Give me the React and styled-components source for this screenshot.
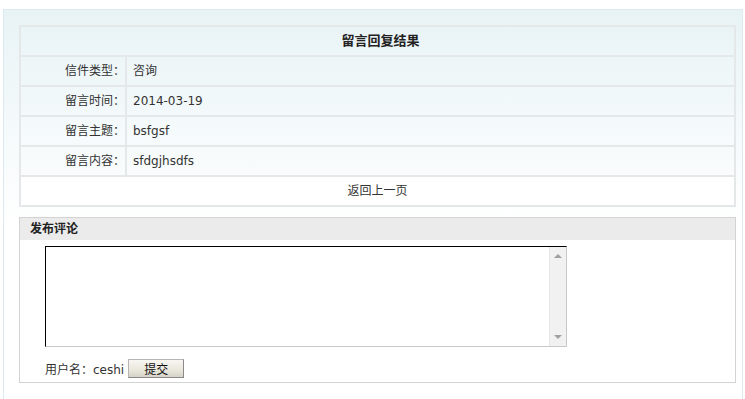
import React from "react";
import styled, { createGlobalStyle } from "styled-components";

const GlobalStyle = createGlobalStyle`
  body {
    margin: 0;
    background: #fff;
    font-family: "DejaVu Sans", "Noto Sans CJK SC", sans-serif;
    font-size: 12px;
    color: #333;
  }
`;

const rows = [
  { label: "信件类型：", value: "咨询" },
  { label: "留言时间：", value: "2014-03-19" },
  { label: "留言主题：", value: "bsfgsf" },
  { label: "留言内容：", value: "sfdgjhsdfs" },
];

const App = () => {
  return (
    <>
      <GlobalStyle />
      <Container>
        <ResultTable>
          <HeadRow>留言回复结果</HeadRow>
          {rows.map((row) => (
            <Row key={row.label}>
              <Label>{row.label}</Label>
              <Value>{row.value}</Value>
            </Row>
          ))}
          <BackRow>返回上一页</BackRow>
        </ResultTable>

        <CommentBox>
          <CommentTitle>发布评论</CommentTitle>
          <CommentBody>
            <TextBox>
              <Input />
              <ScrollBar>
                <Arrow />
                <Arrow down />
              </ScrollBar>
            </TextBox>
            <SubmitRow>
              <span>用户名：ceshi</span>
              <Button>提交</Button>
            </SubmitRow>
          </CommentBody>
        </CommentBox>
      </Container>
    </>
  );
};

export default App;

const Container = styled.div`
  margin: 9px 0 0 3px;
  width: 723px;
  min-height: 420px;
  padding: 15px 0 0 15px;
  border: 1px solid #dce9ee;
  background: linear-gradient(to bottom, #e8f3f6 0, #ffffff 215px) no-repeat #fff;
`;

const ResultTable = styled.div`
  width: 713px;
  border: 2px solid #e5e8e9;
`;

const HeadRow = styled.div`
  height: 28px;
  line-height: 28px;
  text-align: center;
  font-size: 13px;
  font-weight: bold;
  color: #222;
  padding-left: 6px;
  border-bottom: 2px solid #e5e8e9;
`;

const Row = styled.div`
  display: grid;
  grid-template-columns: 106px 1fr;
  height: 28px;
  line-height: 28px;
  border-bottom: 2px solid #e5e8e9;
`;

const Label = styled.div`
  text-align: right;
  padding-right: 0;
  border-right: 2px solid #e5e8e9;
`;

const Value = styled.div`
  padding-left: 6px;
`;

const BackRow = styled.div`
  height: 28px;
  line-height: 28px;
  text-align: center;
  background: #fff;
`;

const CommentBox = styled.div`
  width: 715px;
  margin-top: 10px;
  border: 1px solid #d3d3d3;
  background: #fff;
`;

const CommentTitle = styled.div`
  height: 22px;
  line-height: 22px;
  padding-left: 10px;
  background: #ebebeb;
  font-weight: bold;
  color: #222;
`;

const CommentBody = styled.div`
  padding: 6px 0 4px 25px;
`;

const TextBox = styled.div`
  display: flex;
  width: 520px;
  height: 99px;
  border-top: 1px solid #000;
  border-left: 1px solid #000;
  border-right: 1px solid #c8c8c8;
  border-bottom: 1px solid #c8c8c8;
  background: #fff;
`;

const Input = styled.textarea`
  flex: 1;
  border: none;
  outline: none;
  resize: none;
  padding: 2px;
  font: inherit;
`;

const ScrollBar = styled.div`
  width: 16px;
  display: flex;
  flex-direction: column;
  justify-content: space-between;
  align-items: center;
  padding: 7px 0;
  background: #f1f1f1;
  border-left: 1px solid #e6e6e6;
`;

const Arrow = styled.div`
  width: 0;
  height: 0;
  border-left: 4px solid transparent;
  border-right: 4px solid transparent;
  ${(p) =>
    p.down
      ? "border-top: 4px solid #a0a0a0;"
      : "border-bottom: 4px solid #a0a0a0;"}
`;

const SubmitRow = styled.div`
  display: flex;
  align-items: center;
  gap: 4px;
  margin-top: 12px;
`;

const Button = styled.button`
  width: 56px;
  height: 19px;
  padding: 0;
  font: inherit;
  color: #111;
  border: 1px solid #8a8a8a;
  border-top-color: #b5b5b5;
  border-left-color: #b5b5b5;
  background: linear-gradient(to bottom, #f7f6f1 0%, #e9e6dc 60%, #d6d2c6 100%);
`;
